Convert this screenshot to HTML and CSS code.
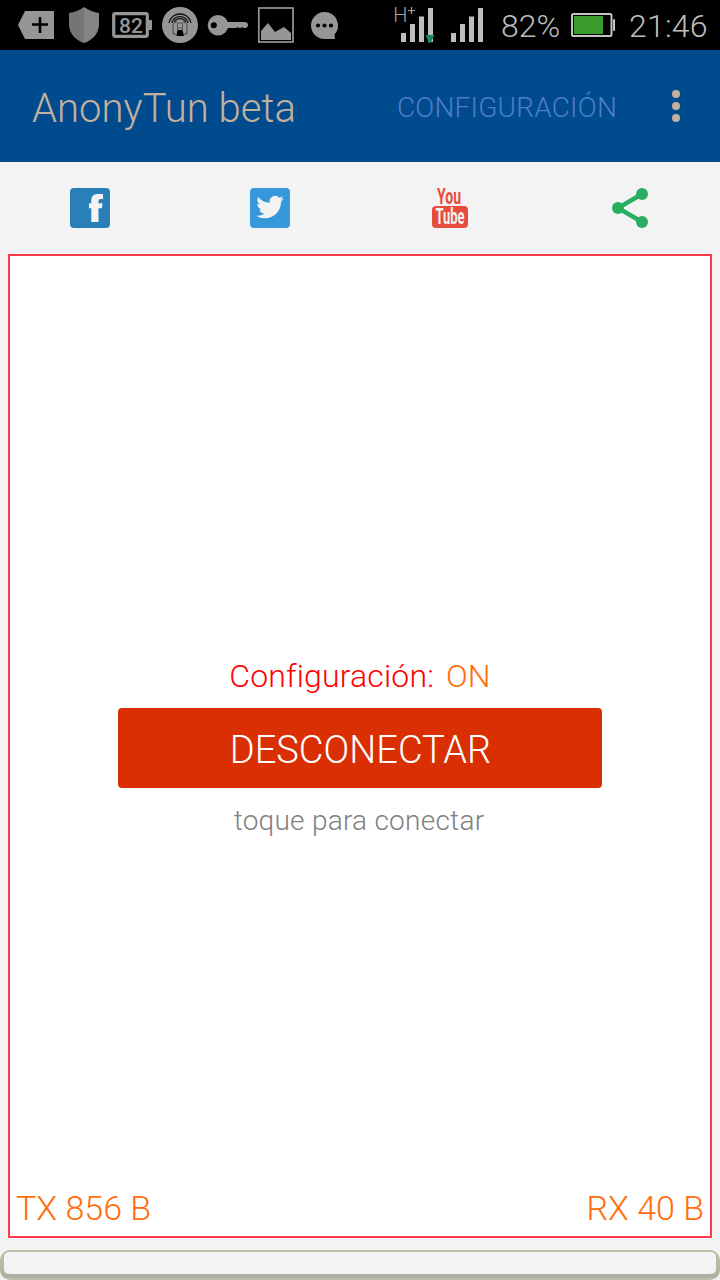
FILE: index.html
```html
<!DOCTYPE html>
<html lang="es">
<head>
    <meta charset="UTF-8">
    <meta name="viewport" content="width=device-width, initial-scale=1.0">
    <title>AnonyTun beta</title>
    <link rel="stylesheet" href="styles.css">
</head>
<body>

    <div class="status-bar">
        <div class="notifications">
            <svg class="tag" width="36" height="50" viewBox="0 0 36 50">
                <path d="M0 25L7 11H36V39H7Z" fill="#969696"/>
                <path d="M22 17V33M14 24.500H30" stroke="#000" stroke-width="2.600"/>
            </svg>
            <svg class="shield" width="32" height="50" viewBox="0 0 32 50">
                <path d="M16 7Q9 12 1 13V25Q2 38 16 43Z" fill="#757575"/>
                <path d="M16 7Q23 12 31 13V25Q30 38 16 43Z" fill="#858585"/>
            </svg>
            <svg class="level" width="40" height="50" viewBox="0 0 40 50">
                <rect x="1.700" y="13.700" width="33.600" height="22.600" rx="1.500" fill="none" stroke="#969696" stroke-width="3.200"/>
                <rect x="36" y="20" width="4" height="10" rx="1" fill="#969696"/>
                <text class="level-text" x="19" y="32.500" text-anchor="middle">82</text>
            </svg>
            <svg class="tunnel" width="36" height="50" viewBox="0 0 36 50">
                <circle cx="18" cy="25" r="18" fill="#969696"/>
                <g fill="none" stroke="#111" stroke-width="1.300">
                    <path d="M7 23C9 11 27 11 29 23M10 23C12 14.500 24 14.500 26 23M12.500 22C14 17.500 22 17.500 23.500 22"/>
                    <path d="M14.500 34H11V25Q12 22 15 21.500M21.500 34H25V25Q24 22 21 21.500" stroke="#444" stroke-width="1"/>
                    <path d="M15.500 30V23H20.500V30M15.500 28H20.500" stroke="#555" stroke-width="1"/>
                </g>
                <path d="M15.500 30H20.500L22 36H14.500Z" fill="#000"/>
            </svg>
            <svg class="key" width="40" height="50" viewBox="0 0 40 50">
                <circle cx="10" cy="25.300" r="10.300" fill="#969696"/>
                <path d="M18 22H37Q40 22.500 40 25Q40 27.500 37 28H35.500L34 27L32.500 28H31L29.500 27L28 28H18Z" fill="#969696"/>
                <circle cx="5.800" cy="25.300" r="3" fill="#000"/>
            </svg>
            <svg class="picture" width="36" height="50" viewBox="0 0 36 50">
                <rect x=".8" y="8" width="34.200" height="34" fill="none" stroke="#969696" stroke-width="1.700"/>
                <path d="M3 40V31L10 23L17 32L26 27L33 33V40Z" fill="#969696"/>
            </svg>
            <svg class="chat" width="27" height="50" viewBox="0 0 27 50">
                <path d="M13.500 12A13.500 13.500 0 0 1 23.500 34.500L24 39H13.500A13.500 13.500 0 0 1 13.500 12Z" fill="#969696"/>
                <g fill="#000">
                    <circle cx="7" cy="25.500" r="2.100"/>
                    <circle cx="13.500" cy="25.500" r="2.100"/>
                    <circle cx="20" cy="25.500" r="2.100"/>
                </g>
            </svg>
        </div>
        <div class="system">
            <svg class="signal" width="40" height="50" viewBox="0 0 40 50">
                <path d="M6 33h5v9H6zM15 24h5v18h-5zM24 16.500h5V42h-5zM33 8h5v34h-5z" fill="#bebebe"/>
                <path d="M30.500 35H39.500L35.500 43H34Z" fill="#178561"/>
                <text class="network" x="-1.700" y="21.500">H</text>
                <path d="M16.500 7V14M13 10.500H20" stroke="#a5a5a5" stroke-width="1.200"/>
            </svg>
            <svg class="signal-two" width="32" height="50" viewBox="0 0 32 50">
                <path d="M0 33h5v9H0zM9 24h5v18H9zM18 16.500h5V42h-5zM27 8h5v34h-5z" fill="#bebebe"/>
            </svg>
            <span class="percent">82%</span>
            <svg class="battery" width="44" height="50" viewBox="0 0 44 50">
                <rect x="1" y="14" width="39.500" height="22" rx="1.500" fill="none" stroke="#c4c4c4" stroke-width="2"/>
                <rect x="3" y="16" width="29" height="18" fill="#3a9c2c"/>
                <rect x="42" y="19" width="2" height="12" rx="1" fill="#c4c4c4"/>
            </svg>
            <span class="clock">21:46</span>
        </div>
    </div>

    <header class="app-bar">
        <h1>AnonyTun beta</h1>
        <a class="settings">CONFIGURACIÓN</a>
        <div class="menu"><i></i><i></i><i></i></div>
    </header>

    <nav class="social">
        <svg width="40" height="40" viewBox="0 0 40 40">
            <rect width="40" height="40" rx="4" fill="#2980b9"/>
            <path d="M21.300 34V20.200H19V15.200H21.300V12.500Q21.300 6 27.500 6H33V11H30.500Q28.500 11 28.500 13V15.200H32.500L32 20.200H28.500V34Z" fill="#f3f3f3"/>
        </svg>
        <svg width="40" height="40" viewBox="0 0 40 40">
            <rect width="40" height="40" rx="4" fill="#3498db"/>
            <path transform="translate(6.200 5.300) scale(1.150)" d="M23.950 4.570a10 10 0 0 1-2.820.77 4.960 4.960 0 0 0 2.160-2.720c-.95.550-2 .95-3.130 1.180a4.920 4.920 0 0 0-8.380 4.480C7.690 8.090 4.070 6.130 1.640 3.160a4.920 4.920 0 0 0 1.520 6.580 4.900 4.900 0 0 1-2.230-.62v.06a4.920 4.920 0 0 0 3.950 4.830 5 5 0 0 1-2.210.08 4.940 4.940 0 0 0 4.600 3.420A9.870 9.870 0 0 1 0 19.540a14 14 0 0 0 7.550 2.210c9.050 0 14-7.500 14-13.980 0-.21 0-.42-.02-.63a9.900 9.900 0 0 0 2.420-2.570Z" fill="#f3f3f3"/>
        </svg>
        <svg width="40" height="40" viewBox="0 0 40 40">
            <rect x="2" y="18" width="36" height="22" rx="4" fill="#e74c3c"/>
            <text class="you" x="7" y="16" textLength="24" lengthAdjust="spacingAndGlyphs">You</text>
            <text class="tube" x="5.500" y="36" textLength="29" lengthAdjust="spacingAndGlyphs">Tube</text>
        </svg>
        <svg width="40" height="40" viewBox="0 0 40 40">
            <path d="M32 6L8 20L32 34" fill="none" stroke="#27ae60" stroke-width="4.400"/>
            <g fill="#27ae60">
                <circle cx="32" cy="6" r="6"/>
                <circle cx="8" cy="20" r="6"/>
                <circle cx="32" cy="34" r="6"/>
            </g>
        </svg>
    </nav>

    <main class="panel">
        <div class="connection">
            <p class="config"><span>Configuración:</span><span class="on">ON</span></p>
            <button class="disconnect">DESCONECTAR</button>
            <p class="hint">toque para conectar</p>
        </div>
        <div class="traffic">
            <span>TX 856 B</span>
            <span>RX 40 B</span>
        </div>
    </main>

    <footer class="bottom-bar"><div class="bottom-inner"></div></footer>

</body>
</html>
```
FILE: styles.css
```css
/* Global Styles */
* {
    box-sizing: border-box;
    margin: 0;
    padding: 0;
}
body {
    font-family: Roboto, sans-serif;
    font-weight: 300;
    background-color: #f3f3f3;
    width: 720px;
    height: 1280px;
    display: flex;
    flex-direction: column;
    overflow: hidden;
}
svg {
    display: block;
    flex-shrink: 0;
    overflow: visible;
}

/* Status bar */
.status-bar {
    height: 50px;
    background-color: #000;
    color: #bebebe;
    display: flex;
    justify-content: space-between;
    padding: 0 12px 0 18px;
}
.notifications, .system {
    display: flex;
}
.shield {
    margin-left: 14px;
}
.level {
    margin-left: 12px;
}
.tunnel, .key, .picture {
    margin-left: 10px;
}
.chat {
    margin-left: 17px;
}
.level-text {
    font-size: 21px;
    font-weight: 500;
    fill: #969696;
}
.network {
    font-size: 20px;
    font-weight: 300;
    fill: #a5a5a5;
}
.signal-two {
    margin-left: 16px;
}
.percent, .clock {
    font-size: 32px;
    line-height: 52px;
    white-space: nowrap;
}
.percent {
    width: 59px;
    margin-left: 18px;
}
.battery {
    margin-left: 11px;
}
.clock {
    width: 79px;
    margin-left: 14px;
    letter-spacing: 0.2px;
}

/* App bar */
.app-bar {
    height: 112px;
    background-color: #004b8d;
    display: flex;
    align-items: center;
    padding: 0 40px 0 32px;
}
h1 {
    font-size: 40px;
    font-weight: 300;
    line-height: 48px;
    letter-spacing: 0.05px;
    color: #c3b09d;
    padding-top: 6px;
}
.settings {
    font-size: 28px;
    letter-spacing: 0.2px;
    color: #4f7ccb;
    margin-left: auto;
    padding-top: 2px;
}
.menu {
    display: flex;
    flex-direction: column;
    gap: 4px;
    margin-left: 55px;
}
.menu i {
    width: 8px;
    height: 8px;
    border-radius: 50%;
    background-color: #c3b09d;
}

/* Social links */
.social {
    height: 92px;
    display: grid;
    grid-template-columns: repeat(4, 1fr);
    justify-items: center;
    align-items: center;
}
.you, .tube {
    font-size: 22px;
    font-weight: 700;
}
.you {
    fill: #e74c3c;
}
.tube {
    fill: #f3f3f3;
}

/* Main panel */
.panel {
    height: 984px;
    margin: 0 8px;
    background-color: #fff;
    border: 2px solid #ff3b4a;
    display: flex;
    flex-direction: column;
    justify-content: space-between;
}
.connection {
    display: flex;
    flex-direction: column;
    align-items: center;
    padding-top: 400px;
}
.config {
    display: flex;
    gap: 12px;
    font-size: 32px;
    line-height: 40px;
    height: 52px;
    letter-spacing: 0.15px;
    color: #ff0000;
}
.on {
    color: #ff6d0c;
}
.disconnect {
    width: 484px;
    height: 80px;
    border: none;
    border-radius: 4px;
    background-color: #da2f03;
    color: #fff;
    font-family: inherit;
    font-weight: 300;
    font-size: 38px;
    padding: 4px 0 0 1px;
}
.hint {
    font-size: 28px;
    line-height: 34px;
    letter-spacing: 0.25px;
    color: #808080;
    margin-top: 16px;
    padding-right: 2px;
}
.traffic {
    display: flex;
    justify-content: space-between;
    font-size: 34px;
    line-height: 40px;
    color: #ff6d0c;
    padding: 0 6px 8px;
}

/* Bottom bar */
.bottom-bar {
    height: 30px;
    margin-top: 12px;
    padding: 2px 4px 6px;
    border-radius: 10px;
    background: linear-gradient(#c2bda6, #b5b5a5 75%, #abaea6 88%, #c5c2ab);
}
.bottom-inner {
    height: 22px;
    border-radius: 5px;
    background-color: #f3f3f3;
}
```
